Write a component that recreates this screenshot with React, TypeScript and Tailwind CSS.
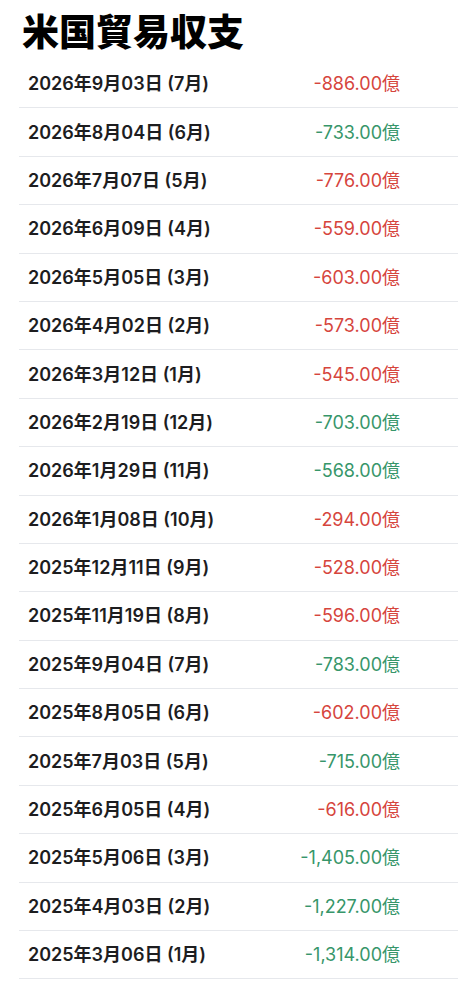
const rows: [string, string, "up" | "down"][] = [
  ["2026年9月03日 (7月)", "-886.00億", "down"],
  ["2026年8月04日 (6月)", "-733.00億", "up"],
  ["2026年7月07日 (5月)", "-776.00億", "down"],
  ["2026年6月09日 (4月)", "-559.00億", "down"],
  ["2026年5月05日 (3月)", "-603.00億", "down"],
  ["2026年4月02日 (2月)", "-573.00億", "down"],
  ["2026年3月12日 (1月)", "-545.00億", "down"],
  ["2026年2月19日 (12月)", "-703.00億", "up"],
  ["2026年1月29日 (11月)", "-568.00億", "up"],
  ["2026年1月08日 (10月)", "-294.00億", "down"],
  ["2025年12月11日 (9月)", "-528.00億", "down"],
  ["2025年11月19日 (8月)", "-596.00億", "down"],
  ["2025年9月04日 (7月)", "-783.00億", "up"],
  ["2025年8月05日 (6月)", "-602.00億", "down"],
  ["2025年7月03日 (5月)", "-715.00億", "up"],
  ["2025年6月05日 (4月)", "-616.00億", "down"],
  ["2025年5月06日 (3月)", "-1,405.00億", "up"],
  ["2025年4月03日 (2月)", "-1,227.00億", "up"],
  ["2025年3月06日 (1月)", "-1,314.00億", "up"],
]

export default function App() {
  return (
    <div className="min-h-screen bg-white pt-[8px] font-['Inter','Noto_Sans_CJK_JP',sans-serif]">
      <h1 className="pl-[22px] text-[37px] leading-[44px] font-black text-black font-['Noto_Sans_CJK_JP',sans-serif]">
        米国貿易収支
      </h1>
      <div className="ml-[19px] mt-[8px]">
        {rows.map(([date, value, dir]) => (
          <div key={date} className="flex h-[48.4px] items-center border-b border-[#e6e8ec]">
            <span className="pl-[9px] w-[250px] text-[18px] font-semibold text-[#1d1d1f]">{date}</span>
            <span
              className={
                "w-[131px] text-right text-[18px] " +
                (dir === "down" ? "text-[#d6453d]" : "text-[#37966a]")
              }
            >
              {value}
            </span>
          </div>
        ))}
      </div>
    </div>
  )
}
